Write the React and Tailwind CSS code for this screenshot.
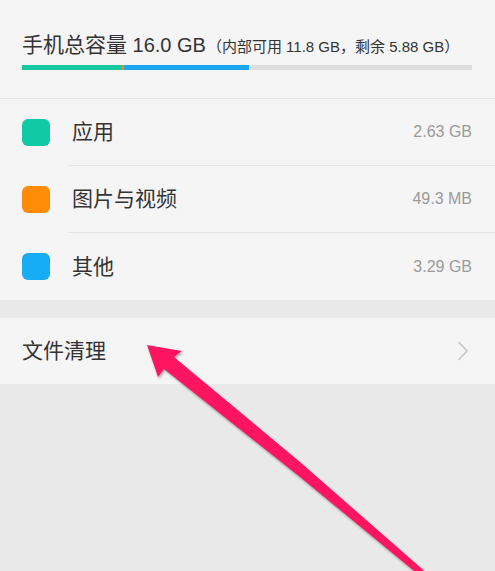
import React from 'react';

const rows = [
  { color: 'bg-[#12c9a5]', label: '应用', size: '2.63 GB' },
  { color: 'bg-[#ff8c05]', label: '图片与视频', size: '49.3 MB' },
  { color: 'bg-[#17adf5]', label: '其他', size: '3.29 GB' },
];

function Arrow() {
  // pink annotation arrow drawn over the page
  return (
    <svg
      className="absolute inset-0 pointer-events-none drop-shadow-[1px_2px_1px_rgba(0,0,0,0.3)]"
      width="495"
      height="571"
      viewBox="0 0 495 571"
    >
      <polygon
        points="147,345 182,351 174,357 300,462 429,575 419,575 300,477 164,369 158,377"
        fill="#fe1562"
      />
    </svg>
  );
}

export default function App() {
  return (
    <div className="relative w-[495px] h-[571px] overflow-hidden bg-[#e9e9e9] font-['Liberation_Sans','Noto_Sans_CJK_SC',sans-serif] text-[#333]">
      <div className="bg-[#f5f5f5]">
        {/* storage summary */}
        <div className="h-[99px] px-[22px] pt-[31px] border-b border-[#e4e4e4]">
          <div className="flex items-baseline leading-[28px] whitespace-nowrap">
            <span className="text-[21px]">手机总容量</span>
            <span className="text-[20px]">&nbsp;16.0 GB</span>
            <span className="text-[15px] ml-[1px]">（内部可用 11.8 GB，剩余 5.88 GB）</span>
          </div>
          <div className="mt-[4px] flex h-[5px] w-[450px]">
            <div className="w-[100px] bg-[#14c8a2]" />
            <div className="w-[2px] bg-[#f08a24]" />
            <div className="w-[125px] bg-[#1ba8f0]" />
            <div className="flex-1 bg-[#dedede]" />
          </div>
        </div>

        {rows.map((r, i) => (
          <div key={r.label} className="flex items-center h-[67px] pl-[22px]">
            <div className={`w-[28px] h-[27px] rounded-[6px] ${r.color}`} />
            <div
              className={`ml-[18px] flex-1 h-full flex items-center justify-between pl-[4px] pr-[23px] ${
                i < rows.length - 1 ? 'border-b border-[#e4e4e4]' : ''
              }`}
            >
              <span className="text-[21px]">{r.label}</span>
              <span className="text-[16px] text-[#9a9a9a]">{r.size}</span>
            </div>
          </div>
        ))}
      </div>

      <div className="h-[18px]" />

      <div className="h-[66px] bg-[#f5f5f5] flex items-center justify-between pl-[22px] pr-[26px]">
        <span className="text-[21px]">文件清理</span>
        <svg width="12" height="20" viewBox="0 0 12 20">
          <polyline points="1.5,1 10,10 1.5,19" fill="none" stroke="#c4c4c4" strokeWidth="1.5" />
        </svg>
      </div>

      <Arrow />
    </div>
  );
}
